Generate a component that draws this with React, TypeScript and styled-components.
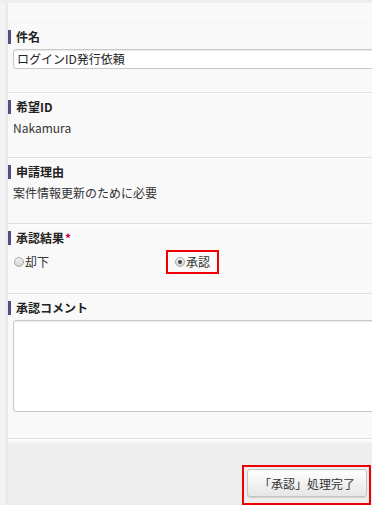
import styled, { createGlobalStyle } from "styled-components";

const GlobalStyle = createGlobalStyle`
  html, body {
    margin: 0;
    padding: 0;
    background: #f9f9f9;
    overflow: hidden;
  }
  body {
    font-family: "Noto Sans CJK JP", "Noto Sans", sans-serif;
    font-size: 12px;
    color: #222;
  }
`;

const Page = styled.div`
  display: flex;
  width: 372px;
  height: 505px;
  border-top: 3px solid #eeeeee;
  box-sizing: border-box;
  overflow: hidden;
`;

const SideStrip = styled.div`
  width: 8px;
  flex: none;
  background: #f3f3f3;
  box-shadow: inset -3px 0 2px -1px #e6e6e6;
`;

const Main = styled.div`
  flex: 1;
  min-width: 0;
  display: flex;
  flex-direction: column;
  background: #f9f9f9;
`;

const TopBand = styled.div`
  height: 22px;
  border-bottom: 1px solid #f2f2f2;
`;

const Section = styled.section<{ $pad: number }>`
  padding: 7px 0 ${(p) => p.$pad}px 0;
  border-bottom: 1px solid #e0e0e0;
  box-shadow: 0 1px 0 #fdfdfd;
`;

const Heading = styled.h3`
  margin: 0 0 5px 0;
  padding-left: 5px;
  border-left: 3px solid #5b4a86;
  font-size: 12px;
  font-weight: bold;
  line-height: 14px;
  color: #222;
`;

const Required = styled.span`
  color: #c0004a;
  margin-left: 1px;
`;

const Value = styled.div`
  padding-left: 5px;
  line-height: 18px;
  color: #333;
`;

const TextField = styled.div`
  margin-left: 5px;
  width: 400px;
  height: 20px;
  box-sizing: border-box;
  border: 1px solid #c8c8c8;
  border-radius: 3px;
  background: #fff;
  box-shadow: inset 0 1px 1px #e8e8e8;
  padding: 0 3px;
  line-height: 18px;
  color: #222;
`;

const TextArea = styled.div`
  margin-left: 5px;
  width: 400px;
  height: 92px;
  box-sizing: border-box;
  border: 1px solid #c8c8c8;
  border-radius: 3px;
  background: #fff;
  box-shadow: inset 0 1px 1px #e8e8e8;
`;

const RadioRow = styled.div`
  display: grid;
  grid-template-columns: 153px auto;
  align-items: center;
  padding-left: 5px;
`;

const Option = styled.label<{ $marked?: boolean }>`
  display: inline-flex;
  align-items: center;
  justify-self: start;
  line-height: 16px;
  color: #333;
  border: 2px solid ${(p) => (p.$marked ? "#ee0000" : "transparent")};
  padding: 2px 7px 2px 7px;
  margin-left: ${(p) => (p.$marked ? 0 : -8)}px;
`;

const Radio = styled.span<{ $checked?: boolean }>`
  position: relative;
  width: 10px;
  height: 10px;
  border-radius: 50%;
  border: 1px solid #a9a9a9;
  background: linear-gradient(#f2f2f2, #d4d4d4);
  box-sizing: border-box;
  margin-right: 1px;
  &::after {
    content: "";
    display: ${(p) => (p.$checked ? "block" : "none")};
    position: absolute;
    left: 2px;
    top: 2px;
    width: 4px;
    height: 4px;
    border-radius: 50%;
    background: #444;
  }
`;

const Footer = styled.div`
  flex: 1;
  margin-top: 3px;
  background: #eeeeee;
  border-top: 1px solid #f4f4f4;
  display: flex;
  justify-content: flex-end;
  align-items: flex-start;
  padding-top: 22px;
`;

const Highlight = styled.div`
  border: 2px solid #ee0000;
  padding: 2px 2px 6px 3px;
  margin-right: 1px;
`;

const Button = styled.button`
  width: 120px;
  height: 28px;
  border: 1px solid #c4c4c4;
  border-radius: 3px;
  background: linear-gradient(#ffffff, #e6e6e6);
  box-shadow: 0 1px 1px #d0d0d0;
  font-family: "Noto Sans CJK JP", "Noto Sans", sans-serif;
  font-size: 12px;
  color: #333;
  padding: 0;
`;

export default function App() {
  return (
    <>
      <GlobalStyle />
      <Page>
        <SideStrip />
        <Main>
          <TopBand />
          <Section $pad={23}>
            <Heading>件名</Heading>
            <TextField>ログインID発行依頼</TextField>
          </Section>
          <Section $pad={20}>
            <Heading>希望ID</Heading>
            <Value>Nakamura</Value>
          </Section>
          <Section $pad={21}>
            <Heading>申請理由</Heading>
            <Value>案件情報更新のために必要</Value>
          </Section>
          <Section $pad={19}>
            <Heading>
              承認結果<Required>*</Required>
            </Heading>
            <RadioRow>
              <Option>
                <Radio />
                却下
              </Option>
              <Option $marked>
                <Radio $checked />
                承認
              </Option>
            </RadioRow>
          </Section>
          <Section $pad={26}>
            <Heading>承認コメント</Heading>
            <TextArea />
          </Section>
          <Footer>
            <Highlight>
              <Button>「承認」処理完了</Button>
            </Highlight>
          </Footer>
        </Main>
      </Page>
    </>
  );
}
